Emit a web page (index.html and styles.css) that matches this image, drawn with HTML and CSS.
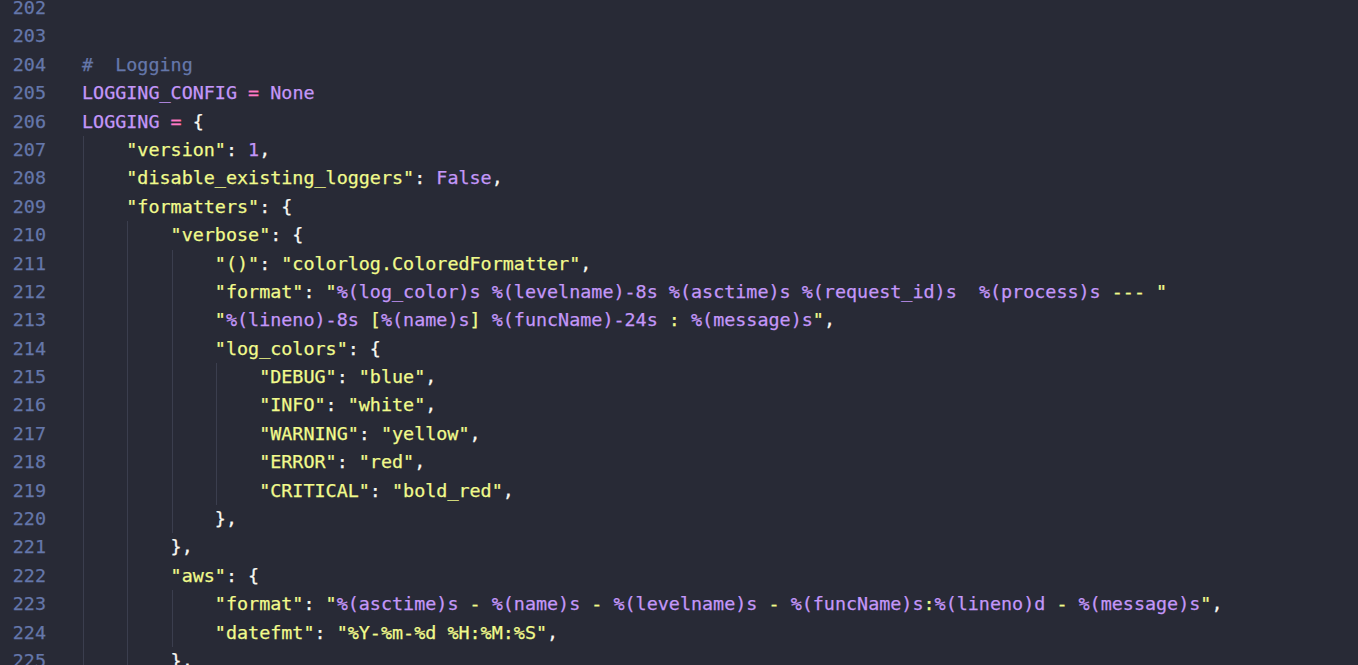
FILE: index.html
```html
<!DOCTYPE html>
<html lang="en">
<head>
<meta charset="utf-8">
<title>settings.py</title>
<link rel="stylesheet" href="styles.css">
</head>
<body>
<div class="editor">
  <div class="line"><span class="ln">202</span><span class="code"></span></div>
  <div class="line"><span class="ln">203</span><span class="code"></span></div>
  <div class="line"><span class="ln">204</span><span class="code"><span class="c">#  Logging</span></span></div>
  <div class="line"><span class="ln">205</span><span class="code"><span class="t"><span class="p">LOGGING_CONFIG</span> <span class="k">=</span> <span class="p">None</span></span></span></div>
  <div class="line"><span class="ln">206</span><span class="code"><span class="t"><span class="p">LOGGING</span> <span class="k">=</span> {</span></span></div>
  <div class="line"><span class="ln">207</span><span class="code"><span class="ind"></span><span class="t"><span class="s">"version"</span>: <span class="p">1</span>,</span></span></div>
  <div class="line"><span class="ln">208</span><span class="code"><span class="ind"></span><span class="t"><span class="s">"disable_existing_loggers"</span>: <span class="p">False</span>,</span></span></div>
  <div class="line"><span class="ln">209</span><span class="code"><span class="ind"></span><span class="t"><span class="s">"formatters"</span>: {</span></span></div>
  <div class="line"><span class="ln">210</span><span class="code"><span class="ind"></span><span class="ind"></span><span class="t"><span class="s">"verbose"</span>: {</span></span></div>
  <div class="line"><span class="ln">211</span><span class="code"><span class="ind"></span><span class="ind"></span><span class="ind"></span><span class="t"><span class="s">"()"</span>: <span class="s">"colorlog.ColoredFormatter"</span>,</span></span></div>
  <div class="line"><span class="ln">212</span><span class="code"><span class="ind"></span><span class="ind"></span><span class="ind"></span><span class="t"><span class="s">"format"</span>: <span class="s">"<span class="f">%(log_color)s</span> <span class="f">%(levelname)-8s</span> <span class="f">%(asctime)s</span> <span class="f">%(request_id)s</span>  <span class="f">%(process)s</span> --- "</span></span></span></div>
  <div class="line"><span class="ln">213</span><span class="code"><span class="ind"></span><span class="ind"></span><span class="ind"></span><span class="t"><span class="s">"<span class="f">%(lineno)-8s</span> [<span class="f">%(name)s</span>] <span class="f">%(funcName)-24s</span> : <span class="f">%(message)s</span>"</span>,</span></span></div>
  <div class="line"><span class="ln">214</span><span class="code"><span class="ind"></span><span class="ind"></span><span class="ind"></span><span class="t"><span class="s">"log_colors"</span>: {</span></span></div>
  <div class="line"><span class="ln">215</span><span class="code"><span class="ind"></span><span class="ind"></span><span class="ind"></span><span class="ind"></span><span class="t"><span class="s">"DEBUG"</span>: <span class="s">"blue"</span>,</span></span></div>
  <div class="line"><span class="ln">216</span><span class="code"><span class="ind"></span><span class="ind"></span><span class="ind"></span><span class="ind"></span><span class="t"><span class="s">"INFO"</span>: <span class="s">"white"</span>,</span></span></div>
  <div class="line"><span class="ln">217</span><span class="code"><span class="ind"></span><span class="ind"></span><span class="ind"></span><span class="ind"></span><span class="t"><span class="s">"WARNING"</span>: <span class="s">"yellow"</span>,</span></span></div>
  <div class="line"><span class="ln">218</span><span class="code"><span class="ind"></span><span class="ind"></span><span class="ind"></span><span class="ind"></span><span class="t"><span class="s">"ERROR"</span>: <span class="s">"red"</span>,</span></span></div>
  <div class="line"><span class="ln">219</span><span class="code"><span class="ind"></span><span class="ind"></span><span class="ind"></span><span class="ind"></span><span class="t"><span class="s">"CRITICAL"</span>: <span class="s">"bold_red"</span>,</span></span></div>
  <div class="line"><span class="ln">220</span><span class="code"><span class="ind"></span><span class="ind"></span><span class="ind"></span><span class="t">},</span></span></div>
  <div class="line"><span class="ln">221</span><span class="code"><span class="ind"></span><span class="ind"></span><span class="t">},</span></span></div>
  <div class="line"><span class="ln">222</span><span class="code"><span class="ind"></span><span class="ind"></span><span class="t"><span class="s">"aws"</span>: {</span></span></div>
  <div class="line"><span class="ln">223</span><span class="code"><span class="ind"></span><span class="ind"></span><span class="ind"></span><span class="t"><span class="s">"format"</span>: <span class="s">"<span class="f">%(asctime)s</span> - <span class="f">%(name)s</span> - <span class="f">%(levelname)s</span> - <span class="f">%(funcName)s</span>:<span class="f">%(lineno)d</span> - <span class="f">%(message)s</span>"</span>,</span></span></div>
  <div class="line"><span class="ln">224</span><span class="code"><span class="ind"></span><span class="ind"></span><span class="ind"></span><span class="t"><span class="s">"datefmt"</span>: <span class="s">"%Y-%m-%d %H:%M:%S"</span>,</span></span></div>
  <div class="line"><span class="ln">225</span><span class="code"><span class="ind"></span><span class="ind"></span><span class="t">},</span></span></div>
</div>
</body>
</html>
```

FILE: styles.css
```css
html, body {
  margin: 0;
  padding: 0;
  height: 665px;
  overflow: hidden;
  background: #282a36;
}

.editor {
  margin-top: -6px;
  font-family: "DejaVu Sans Mono", "Liberation Mono", monospace;
  font-size: 18.4px;
  color: #f8f8f2;
  -webkit-text-stroke: 0.25px;
}

.line {
  display: grid;
  grid-template-columns: 46px 1fr;
  column-gap: 36px;
  height: 28.4px;
  line-height: 28.4px;
}

.ln {
  text-align: right;
  color: #6577aa;
}

.code {
  display: flex;
  white-space: pre;
}

.ind {
  box-sizing: border-box;
  width: 4ch;
  margin-left: 1px;
  margin-right: -1px;
  border-left: 1px solid #3b3e4e;
}

.t { white-space: pre; }
.c { color: #6577aa; }
.p { color: #c497f9; }
.k { color: #ff79c6; }
.s { color: #f1fa8c; }
.f { color: #c497f9; }
```
